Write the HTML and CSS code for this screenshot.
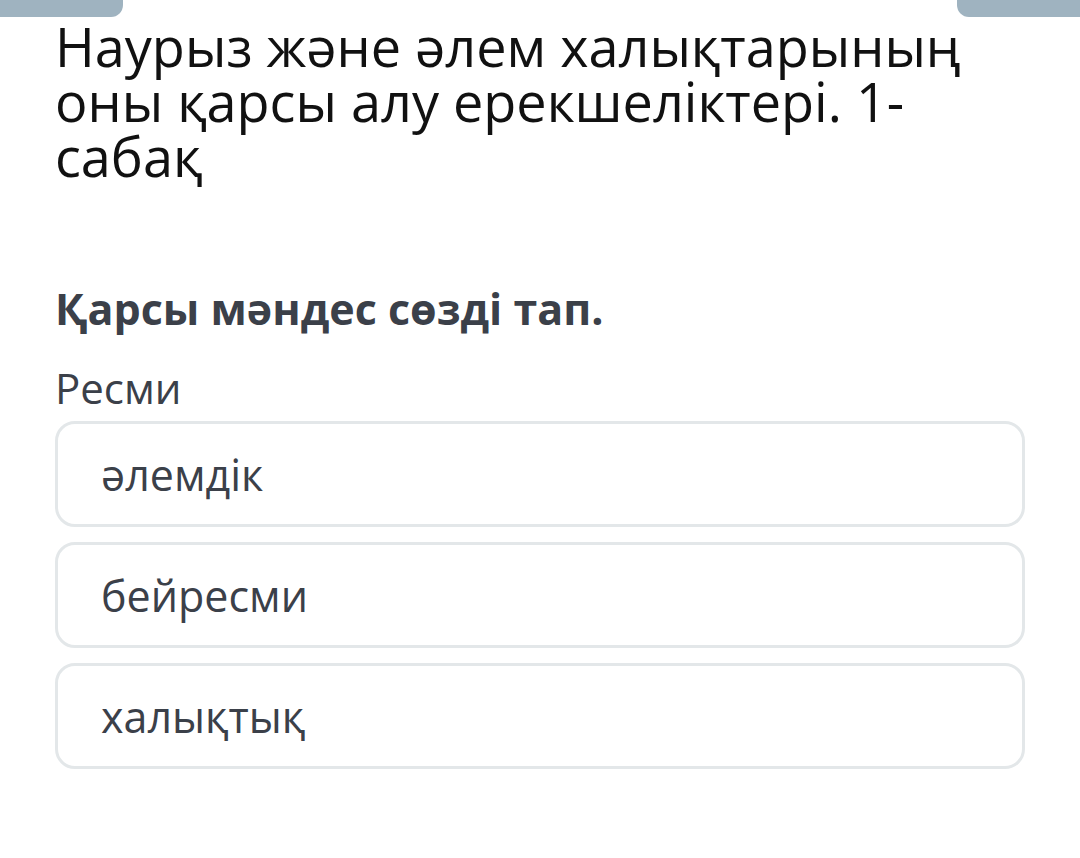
FILE: index.html
```html
<!DOCTYPE html>
<html lang="kk">
<head>
  <meta charset="UTF-8">
  <meta name="viewport" content="width=device-width, initial-scale=1.0">
  <title>Тест</title>
  <link rel="stylesheet" href="styles.css">
</head>
<body>

  <!-- Top tabs -->
  <div class="top-bar">
    <span class="tab"></span>
    <span class="tab tab-right"></span>
  </div>

  <main class="quiz">
    <h1 class="lesson-title">Наурыз және әлем халықтарының оны қарсы алу ерекшеліктері. 1-сабақ</h1>

    <h2 class="question">Қарсы мәндес сөзді тап.</h2>
    <p class="word">Ресми</p>

    <div class="answers">
      <div class="answer">әлемдік</div>
      <div class="answer">бейресми</div>
      <div class="answer">халықтық</div>
    </div>
  </main>

</body>
</html>
```

FILE: styles.css
```css
body {
  margin: 0;
  padding: 0;
  background: #fff;
  font-family: "Open Sans", "Noto Sans", sans-serif;
  color: #111;
}
.top-bar {
  display: flex;
  justify-content: space-between;
  height: 17px;
}
.tab {
  width: 123px;
  height: 17px;
  background-color: #9fb3c0;
  border-bottom-right-radius: 12px;
}
.tab-right {
  border-radius: 0 0 0 12px;
}
.quiz {
  padding: 0 55px 0 55px;
}
.lesson-title {
  margin: 2px 0 0 0;
  font-size: 54px;
  font-weight: 400;
  line-height: 55px;
  width: 940px;
}
.question {
  margin: 100px 0 0 0;
  font-size: 43px;
  font-weight: 700;
  line-height: 50px;
  color: #3b4049;
}
.word {
  margin: 29px 0 0 0;
  font-size: 42px;
  line-height: 50px;
  color: #3b4049;
}
.answers {
  display: flex;
  flex-direction: column;
  gap: 15px;
  margin-top: 8px;
}
.answer {
  height: 100px;
  display: flex;
  align-items: center;
  padding-left: 43px;
  border: 3px solid #e3e7e9;
  border-radius: 20px;
  font-size: 43px;
  color: #3b4049;
}
```
